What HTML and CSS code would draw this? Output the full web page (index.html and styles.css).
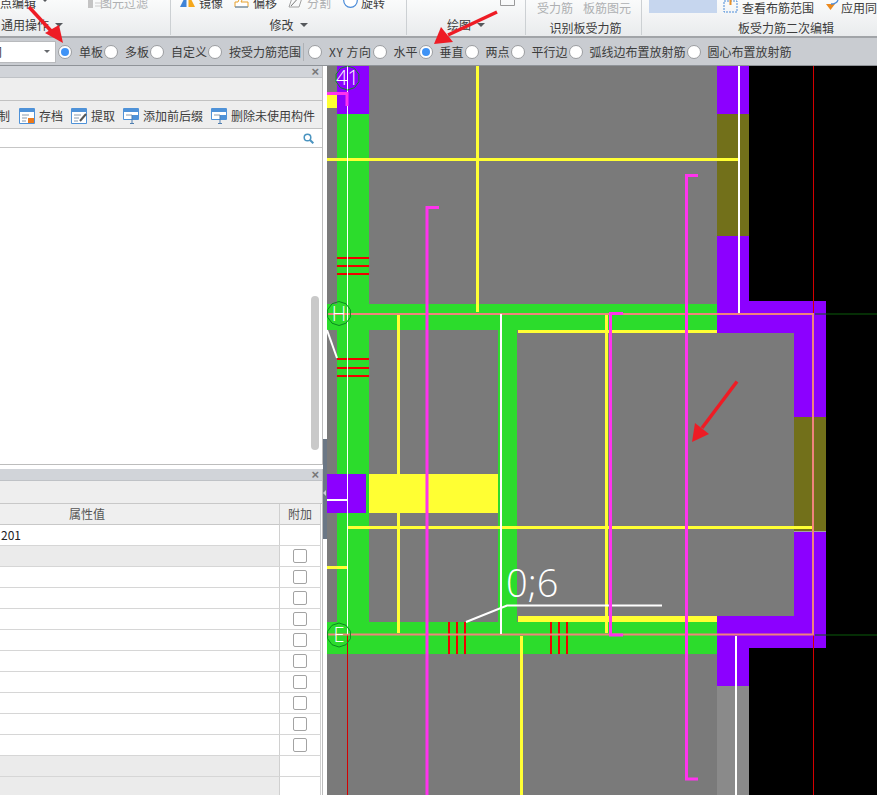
FILE: index.html
```html
<!DOCTYPE html>
<html lang="zh-CN">
<head>
<meta charset="utf-8">
<title>板受力筋</title>
<link rel="stylesheet" href="styles.css">
</head>
<body>
<div class="app">
  <header class="ribbon">
    <section class="group g1">
      <div class="tools">
        <span class="tool">点编辑</span><i class="caret c-edit"></i>
        <span class="tool muted t-filter">
          <svg class="ico" viewBox="0 0 15 15"><path d="M1 2h5v13H1z" fill="#c4c4c4"/><path d="M8 10h6M8 13h6" stroke="#ccc"/></svg>图元过滤</span>
      </div>
      <div class="label left"><span>通用操作</span><i class="caret"></i></div>
    </section>
    <section class="group g2">
      <div class="tools">
        <span class="tool"><svg class="ico" viewBox="0 0 15 15"><path d="M6.500 1v13H0z" fill="#3f83d6"/><path d="M8.500 1v13H15z" fill="#f5a81c"/></svg>镜像</span>
        <span class="tool"><svg class="ico" viewBox="0 0 15 15"><path d="M1 14V9h3l3-7h7v3H9l-2 4h7v5z" fill="#fff" stroke="#e8a12a"/><path d="M1 14h13" stroke="#3f83d6"/></svg>偏移</span>
        <span class="tool muted"><svg class="ico" viewBox="0 0 15 15"><path d="M1 14l3-9h10l-3 9z" fill="none" stroke="#a0a0a0"/><path d="M3 13L13 2" stroke="#777"/></svg>分割</span>
        <span class="tool t-rotate"><svg class="ico" viewBox="0 0 15 15"><circle cx="7.500" cy="7.500" r="6.800" fill="#fff" stroke="#4a8bd8" stroke-width="1.200"/></svg>旋转</span>
      </div>
      <div class="label"><span>修改</span><i class="caret"></i></div>
    </section>
    <section class="group g3">
      <div class="tools">
        <svg class="corner" viewBox="0 0 15 6"><path d="M.5 0v5.500h14V0" fill="none" stroke="#9a9a9a"/></svg>
      </div>
      <div class="label"><span>绘图</span><i class="caret"></i></div>
    </section>
    <section class="group g4">
      <div class="tools tall">
        <span class="tool muted">受力筋</span>
        <span class="tool muted">板筋图元</span>
      </div>
      <div class="label low nudge"><span>识别板受力筋</span></div>
    </section>
    <section class="group g5">
      <div class="tools tall">
        <div class="swatch"></div>
        <span class="tool"><svg class="ico" viewBox="0 0 15 15"><rect x="1" y="3" width="13" height="11" fill="none" stroke="#4a8bd8" stroke-dasharray="2 1"/><path d="M7.500 0v7" stroke="#e8912a" stroke-width="2"/></svg>查看布筋范围</span>
        <span class="tool t-apply"><svg class="ico" viewBox="0 0 15 15"><path d="M1 6h9l-4.500 6z" fill="#ec8a1e"/><path d="M6 6c3 0 6-1 7-4" fill="none" stroke="#4a8bd8" stroke-width="1.300"/></svg>应用同</span>
      </div>
      <div class="label low offset"><span>板受力筋二次编辑</span></div>
    </section>
  </header>

  <nav class="optbar">
    <div class="select"><span class="select-val">间</span><i class="caret small"></i></div>
    <label class="opt"><i class="radio on"></i>单板</label>
    <label class="opt"><i class="radio"></i>多板</label>
    <label class="opt"><i class="radio"></i>自定义</label>
    <label class="opt"><i class="radio"></i>按受力筋范围</label>
    <i class="optsep"></i>
    <label class="opt xy"><i class="radio"></i>XY 方向</label>
    <label class="opt"><i class="radio"></i>水平</label>
    <label class="opt"><i class="radio on"></i>垂直</label>
    <label class="opt"><i class="radio"></i>两点</label>
    <label class="opt"><i class="radio"></i>平行边</label>
    <label class="opt"><i class="radio"></i>弧线边布置放射筋</label>
    <label class="opt"><i class="radio"></i>圆心布置放射筋</label>
  </nav>

  <main class="main">
    <aside class="side">
      <section class="panel top-panel">
        <div class="phead"><span class="close">×</span></div>
        <div class="strip"></div>
        <div class="actions">
          <span class="act first">制</span>
          <span class="act"><svg class="aico" viewBox="0 0 16 16"><path d="M.5.500h15v15H.5z" fill="#fff" stroke="#4f92d8"/><path d="M1 1h14v3H1z" fill="#4f92d8"/><path d="M3 7h7M3 10h5M3 13h4" stroke="#8a9aac"/><path d="M9 10h6v5H9z" fill="#ea7a1e"/></svg>存档</span>
          <span class="act"><svg class="aico" viewBox="0 0 16 16"><path d="M.5.500h15v15H.5z" fill="#fff" stroke="#4f92d8"/><path d="M1 1h14v3H1z" fill="#4f92d8"/><path d="M3 7h7M3 10h5M3 13h4" stroke="#8a9aac"/><path d="M9 13l6-7" stroke="#555" stroke-width="2"/></svg>提取</span>
          <span class="act"><svg class="aico" viewBox="0 0 16 16"><path d="M.5.500h15v11H.5z" fill="#fff" stroke="#4f92d8"/><path d="M1 1h14v3H1z" fill="#4f92d8"/><path d="M3 7h6" stroke="#8a9aac"/><path d="M9 7h6v5H9z" fill="#4f92d8"/><path d="M9 7v9M7 15.500h4" stroke="#4f7eb0"/></svg>添加前后缀</span>
          <span class="act"><svg class="aico" viewBox="0 0 16 16"><path d="M.5.500h15v11H.5z" fill="#fff" stroke="#4f92d8"/><path d="M1 1h14v3H1z" fill="#4f92d8"/><path d="M3 7h6" stroke="#8a9aac"/><path d="M9 7h6v5H9z" fill="#4f92d8"/><path d="M9 7v9M7 15.500h4" stroke="#4f7eb0"/></svg>删除未使用构件</span>
        </div>
        <div class="search">
          <svg class="mag" viewBox="0 0 11 11"><circle cx="4.500" cy="4.500" r="3.300" fill="none" stroke="#4b94c0" stroke-width="1.500"/><path d="M7 7l3.300 3.300" stroke="#4b94c0" stroke-width="2"/></svg>
        </div>
        <div class="list"><div class="thumb"></div></div>
      </section>

      <section class="panel prop-panel">
        <div class="phead"><span class="close">×</span></div>
        <div class="band"></div>
        <div class="row head"><div class="val head-val">属性值</div><div class="add">附加</div></div>
        <div class="row"><div class="val">201</div><div class="add"></div></div>
        <div class="row"><div class="val grey"></div><div class="add"><i class="check"></i></div></div>
        <div class="row"><div class="val"></div><div class="add"><i class="check"></i></div></div>
        <div class="row"><div class="val"></div><div class="add"><i class="check"></i></div></div>
        <div class="row"><div class="val"></div><div class="add"><i class="check"></i></div></div>
        <div class="row"><div class="val"></div><div class="add"><i class="check"></i></div></div>
        <div class="row"><div class="val"></div><div class="add"><i class="check"></i></div></div>
        <div class="row"><div class="val"></div><div class="add"><i class="check"></i></div></div>
        <div class="row"><div class="val"></div><div class="add"><i class="check"></i></div></div>
        <div class="row"><div class="val"></div><div class="add"><i class="check"></i></div></div>
        <div class="row"><div class="val"></div><div class="add"><i class="check"></i></div></div>
        <div class="row"><div class="val grey"></div><div class="add"></div></div>
        <div class="row"><div class="val grey"></div><div class="add"></div></div>
      </section>
      <div class="splitter"></div>
    </aside>

    <svg class="canvas" viewBox="327 66 550 729" xmlns="http://www.w3.org/2000/svg">
      <defs>
        <polygon id="axis" points="0,-12 7,-9.700 11.400,-3.700 11.400,3.700 7,9.700 0,12 -7,9.700 -11.400,3.700 -11.400,-3.700 -7,-9.700"/>
      </defs>
      <rect class="black" x="327" y="66" width="550" height="729"/>
      <rect class="gray" x="327" y="66" width="390" height="729"/>
      <rect class="gray" x="717" y="333" width="77" height="283"/>
      <rect class="gray2" x="717" y="686" width="32" height="109"/>

      <rect class="purple" x="337" y="66" width="32" height="48"/>
      <rect class="green" x="337" y="114" width="32" height="508"/>
      <rect class="green" x="327" y="304" width="390" height="26"/>
      <rect class="green" x="498" y="330" width="19" height="292"/>
      <rect class="green" x="327" y="622" width="390" height="32"/>
      <rect class="purple" x="327" y="474" width="39" height="39"/>
      <rect class="yellow" x="369" y="474" width="129" height="39"/>
      <rect class="yellow" x="327" y="95" width="10" height="13"/>

      <rect class="purple" x="717" y="66" width="32" height="48"/>
      <rect class="olive" x="717" y="114" width="32" height="122"/>
      <rect class="purple" x="717" y="236" width="32" height="68"/>
      <rect class="purple" x="717" y="301" width="109" height="32"/>
      <rect class="purple" x="794" y="301" width="32" height="116"/>
      <rect class="olive" x="794" y="417" width="32" height="114"/>
      <rect class="purple" x="794" y="532" width="32" height="116"/>
      <rect class="purple" x="717" y="616" width="109" height="32"/>
      <rect class="purple" x="717" y="648" width="32" height="38"/>
      <rect class="lightline" x="794" y="531" width="32" height="1"/>

      <rect class="redbar" x="337" y="257" width="32" height="2"/>
      <rect class="redbar" x="337" y="265" width="32" height="2"/>
      <rect class="redbar" x="337" y="273" width="32" height="2"/>
      <rect class="redbar" x="337" y="358" width="32" height="2"/>
      <rect class="redbar" x="337" y="367" width="32" height="2"/>
      <rect class="redbar" x="337" y="375" width="32" height="2"/>
      <rect class="redbar" x="448" y="622" width="2" height="32"/>
      <rect class="redbar" x="456" y="622" width="2" height="32"/>
      <rect class="redbar" x="464" y="622" width="2" height="32"/>
      <rect class="redbar" x="550" y="622" width="2" height="32"/>
      <rect class="redbar" x="558" y="622" width="2" height="32"/>
      <rect class="redbar" x="566" y="622" width="2" height="32"/>

      <rect class="yellow" x="476" y="66" width="3" height="246"/>
      <rect class="yellow" x="348" y="158" width="390" height="3"/>
      <rect class="yellow" x="327" y="158" width="20" height="3"/>
      <rect class="yellow" x="397" y="315" width="3" height="318"/>
      <rect class="yellow" x="348" y="526" width="464" height="3"/>
      <rect class="yellow" x="605" y="315" width="3" height="318"/>
      <rect class="yellow" x="520" y="636" width="3" height="159"/>
      <rect class="yellow" x="327" y="566" width="20" height="3"/>
      <rect class="yellow" x="518" y="330" width="199" height="3"/>
      <rect class="yellow" x="518" y="616" width="199" height="6"/>

      <path class="dark-green" d="M815 314H877M815 635H877"/>
      <path class="thin-red" d="M813.500 66V795M347.500 634V795"/>
      <path class="rect-line" d="M327 314H813V634.500H327"/>
      <rect class="white" x="347" y="66" width="1" height="568"/>

      <rect class="white" x="500" y="314" width="2" height="320"/>
      <rect class="white" x="738" y="66" width="2" height="247"/>
      <rect class="white" x="735" y="636" width="2" height="159"/>
      <rect class="white" x="327" y="499" width="20" height="2"/>
      <path class="white-line" d="M466 622L507 605.500H662"/>
      <path class="white-line" d="M327 330L337 358"/>

      <path class="magenta" d="M327 93.500H347V106"/>
      <path class="magenta" d="M439 207.500H427V795"/>
      <path class="magenta" d="M698 175.500H686.500V779H698"/>
      <path class="magenta" d="M623 313.500H610.500V635H623"/>

      <use class="axis" href="#axis" x="347.500" y="78"/>
      <use class="axis" href="#axis" x="339" y="313.500"/>
      <use class="axis" href="#axis" x="339" y="635"/>
      <text class="axis-text" x="347.500" y="85">41</text>
      <text class="axis-text" x="339" y="321">H</text>
      <text class="axis-text" x="339" y="642">E</text>
      <text class="dim" x="506" y="597">0;6</text>
    </svg>
  </main>

  <svg class="marks" viewBox="0 0 877 795" xmlns="http://www.w3.org/2000/svg">
    <path class="mark-line" d="M29 7L53 33"/>
    <path class="mark-head" d="M63 43L45 33L59 25Z"/>
    <path class="mark-line" d="M497 12L448 35"/>
    <path class="mark-head" d="M434 44L441 27L453 42Z"/>
    <path class="mark-line" d="M737 381.500L702 428"/>
    <path class="mark-head" d="M692 442L695 423L709 434Z"/>
  </svg>
</div>
</body>
</html>
```

FILE: styles.css
```css
* { box-sizing: border-box; }
html, body { margin: 0; padding: 0; }
body {
  width: 877px;
  height: 795px;
  overflow: hidden;
  background: #fff;
  font: 12px/14px "Noto Sans CJK SC", "Noto Sans", sans-serif;
  color: #3c3c3c;
}
i { display: block; font-style: normal; }
.app { position: relative; width: 877px; height: 795px; overflow: hidden; }

/* ribbon */
.ribbon {
  display: flex;
  height: 38px;
  background: linear-gradient(#fafbfb, #e9ebed);
  border-bottom: 2px solid #a1a4a8;
}
.group { flex: none; height: 35px; border-right: 1px solid #ccd0d3; }
.g1 { width: 171px; }
.g2 { width: 236px; }
.g3 { width: 119px; }
.g4 { width: 116px; }
.g5 { width: 235px; border-right: 0; }
.tools { display: flex; align-items: flex-end; height: 10px; }
.tools.tall { height: 15px; }
.tool { display: flex; flex: none; align-items: flex-end; gap: 4px; white-space: nowrap; }
.muted { color: #aeb0b2; }
.ico { flex: none; width: 15px; height: 15px; margin-bottom: 2px; }
.label {
  display: flex;
  justify-content: center;
  align-items: center;
  gap: 6px;
  height: 14px;
  margin-top: 8px;
}
.label.low { margin-top: 6px; }
.label.nudge { padding-left: 4px; }
.label.left { justify-content: flex-start; padding-left: 1px; }
.label.offset { justify-content: flex-start; padding-left: 96px; }
.caret {
  flex: none;
  width: 0;
  height: 0;
  border: 4px solid transparent;
  border-top: 4px solid #55585c;
  border-bottom: 0;
}
.caret.small { border-width: 3px 3px 0; border-top-color: #66696d; }
.c-edit { margin: 0 0 8px 5px; }
.t-filter { margin-left: 38px; gap: 0; }
.t-filter .ico { margin-right: -2px; }
.g2 .tools { gap: 11px; padding-left: 9px; }
.g2 .t-rotate { gap: 3px; margin-left: 1px; }
.corner { width: 15px; height: 6px; margin: 0 0 4px 93px; }
.g4 .tools { gap: 10px; padding-left: 11px; }
.g5 .tools { padding-left: 7px; }
.swatch { flex: none; width: 68px; height: 13px; margin: 0 6px 2px 0; background: #c6d6ee; }
.t-apply { margin-left: 11px; gap: 1px; }

/* option bar */
.optbar {
  display: flex;
  align-items: center;
  gap: 1px;
  height: 28px;
  background: #c9ccd1;
  border-bottom: 1px solid #8f9398;
}
.select {
  display: flex;
  align-items: center;
  justify-content: space-between;
  flex: none;
  width: 56px;
  height: 22px;
  margin-right: 1px;
  padding-right: 5px;
  overflow: hidden;
  background: #fff;
  border: 1px solid #b8babd;
  border-left: 0;
}
.select-val { margin-left: -10px; }
.opt { display: flex; align-items: center; flex: none; gap: 7px; white-space: nowrap; }
.xy { letter-spacing: .5px; }
.radio {
  display: flex;
  align-items: center;
  justify-content: center;
  width: 14px;
  height: 14px;
  background: #fff;
  border: 1px solid #9b9da0;
  border-radius: 50%;
}
.radio.on::after {
  content: "";
  width: 8px;
  height: 8px;
  background: #3f93f6;
  border-radius: 50%;
}
.optsep { flex: none; width: 1px; height: 18px; margin: 0 3px 0 1px; background: #aeb1b5; }

/* main */
.main { display: flex; height: 729px; }
.side { position: relative; flex: none; width: 327px; height: 729px; overflow: hidden; background: #fff; }
.panel { width: 323px; border-right: 1px solid #bcbcbc; }
.phead {
  display: flex;
  align-items: center;
  justify-content: flex-end;
  height: 12px;
  padding-right: 3px;
  background: #d1d4d9;
  border-bottom: 1px solid #bfc2c6;
}
.close { font: bold 13px/11px "Liberation Sans", sans-serif; color: #777; }
.strip { height: 23px; background: #eeeeee; border-bottom: 1px solid #c2c2c2; }
.actions {
  display: flex;
  align-items: center;
  gap: 8px;
  height: 28px;
  padding-top: 2px;
  background: #eeeeee;
  border-bottom: 1px solid #c2c2c2;
}
.act { display: flex; flex: none; align-items: center; gap: 4px; white-space: nowrap; }
.act.first { margin-left: -2px; margin-right: 1px; }
.aico { flex: none; width: 16px; height: 16px; }
.search {
  display: flex;
  align-items: center;
  justify-content: flex-end;
  height: 19px;
  padding-right: 8px;
  border-bottom: 1px solid #c6c6c6;
}
.mag { width: 11px; height: 11px; }
.list { position: relative; height: 317px; border-bottom: 1px solid #bdbdbd; }
.thumb {
  position: absolute;
  top: 148px;
  left: 311px;
  width: 8px;
  height: 154px;
  background: #c9c9c9;
  border-radius: 4px;
}
.prop-panel { margin-top: 4px; }
.band { height: 23px; background: #eeeeee; border-bottom: 1px solid #c8c8c8; }
.row { display: flex; height: 21px; }
.val {
  flex: none;
  width: 280px;
  padding-left: 1px;
  border-right: 1px solid #d0d0d0;
  border-bottom: 1px solid #d6d6d6;
  line-height: 20px;
  color: #222;
}
.val.grey { background: #ebebeb; }
.add {
  display: flex;
  align-items: center;
  justify-content: center;
  flex: none;
  width: 41px;
  border-right: 1px solid #d0d0d0;
  border-bottom: 1px solid #d6d6d6;
}
.head .val, .head .add { background: #efefef; border-bottom-color: #c8c8c8; color: #555; line-height: 20px; }
.head-val { padding: 0 105px 0 0; text-align: center; }
.check { width: 14px; height: 14px; margin-bottom: 1px; background: #fff; border: 1px solid #a3a3a3; border-radius: 2px; }
.splitter {
  position: absolute;
  top: 373px;
  left: 323px;
  display: flex;
  align-items: center;
  width: 4px;
  height: 100px;
  background: #6b7785;
}
.splitter::after {
  content: "";
  margin-top: 8px;
  border: 3px solid transparent;
  border-left: 0;
  border-right: 3px solid #c8cdd3;
}

/* drawing */
.canvas { display: block; flex: none; width: 550px; height: 729px; }
.black { fill: #000; }
.gray { fill: #7a7a7a; }
.gray2 { fill: #8a8a8a; }
.green { fill: #2cdc2c; }
.purple { fill: #8c00ff; }
.yellow { fill: #ffff33; }
.olive { fill: #72701a; }
.redbar { fill: #f00000; }
.white { fill: #fff; }
.lightline { fill: #a3a3a3; }
.canvas rect { shape-rendering: crispEdges; }
.rect-line { fill: none; stroke: #f0837c; stroke-width: 2; }
.dark-green { fill: none; stroke: #0a5c0a; stroke-width: 1; }
.thin-red { fill: none; stroke: #d40000; stroke-width: 1; }
.white-line { fill: none; stroke: #fff; stroke-width: 2; }
.magenta { fill: none; stroke: #ff33ee; stroke-width: 3; }
.axis { fill: none; stroke: #0c8a20; stroke-width: 1; }
.axis-text { fill: #fff; font: 300 20px "Open Sans", sans-serif; text-anchor: middle; }
.dim { fill: #fff; font: 300 38px "Open Sans", sans-serif; }

/* annotation arrows */
.marks { position: absolute; top: 0; left: 0; width: 877px; height: 795px; pointer-events: none; }
.mark-line { fill: none; stroke: #ee1c25; stroke-width: 3.500; }
.mark-head { fill: #ee1c25; }
```
